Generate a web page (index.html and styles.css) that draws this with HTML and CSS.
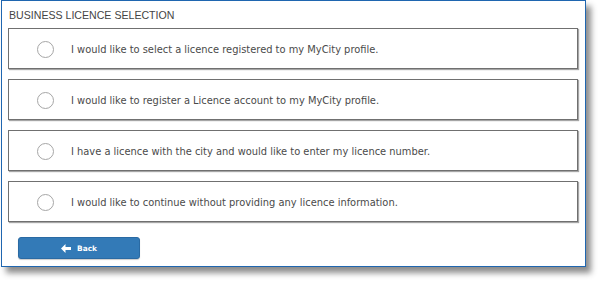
FILE: index.html
```html
<!DOCTYPE html>
<html>
<head>
<meta charset="utf-8">
<link rel="stylesheet" href="styles.css">
</head>
<body>
<div class="frame">
  <h1 class="title">BUSINESS LICENCE SELECTION</h1>
  <div class="options">
    <label class="option"><span class="radio"></span><span class="label">I would like to select a licence registered to my MyCity profile.</span></label>
    <label class="option"><span class="radio"></span><span class="label">I would like to register a Licence account to my MyCity profile.</span></label>
    <label class="option"><span class="radio"></span><span class="label">I have a licence with the city and would like to enter my licence number.</span></label>
    <label class="option"><span class="radio"></span><span class="label">I would like to continue without providing any licence information.</span></label>
  </div>
  <button class="back"><svg class="arrow" width="10" height="9" viewBox="0 0 10 9"><path d="M0 4.5 L4.5 0 L4.5 3 L10 3 L10 6 L4.5 6 L4.5 9 Z" fill="#fff"/></svg><span>Back</span></button>
</div>
</body>
</html>
```

FILE: styles.css
```css
html, body {
  margin: 0;
  padding: 0;
  background: #fff;
}
body {
  width: 599px;
  height: 284px;
  overflow: hidden;
}
.frame {
  box-sizing: border-box;
  margin-left: 1px;
  width: 585px;
  height: 267px;
  border: 1px solid #1f66b0;
  background: #fff;
  box-shadow: 5px 6px 6px rgba(0, 0, 0, 0.45);
  padding: 0 7px 0 6px;
  display: flex;
  flex-direction: column;
}
.title {
  margin: 8px 0 0 1px;
  font-family: "Liberation Sans", Arial, sans-serif;
  font-weight: normal;
  font-size: 10.6px;
  line-height: 12px;
  color: #444;
  height: 19px;
}
.options {
  display: flex;
  flex-direction: column;
  gap: 10px;
}
.option {
  box-sizing: border-box;
  height: 41px;
  border: 1px solid #707070;
  box-shadow: 1px 1px 1px rgba(0, 0, 0, 0.35);
  display: flex;
  align-items: center;
  padding-left: 28px;
  padding-top: 2px;
}
.radio {
  box-sizing: border-box;
  width: 17px;
  height: 17px;
  border: 1px solid #a6a6a6;
  border-radius: 50%;
  flex: none;
  margin-top: -1px;
}
.label {
  margin-left: 17px;
  font-family: "DejaVu Sans", Verdana, sans-serif;
  font-size: 9.9px;
  color: #4a4a4a;
}
.back {
  margin: 15px 0 0 10px;
  box-sizing: border-box;
  width: 122px;
  height: 22px;
  background: #337ab7;
  border: 1px solid #2a6aa3;
  border-radius: 3px;
  box-shadow: 0 1px 1px rgba(0, 0, 0, 0.2);
  display: flex;
  align-items: center;
  justify-content: center;
  gap: 6px;
  padding: 0;
  color: #fff;
  font-family: "DejaVu Sans", Verdana, sans-serif;
  font-size: 7.4px;
  font-weight: bold;
}
.arrow {
  display: block;
}
```
